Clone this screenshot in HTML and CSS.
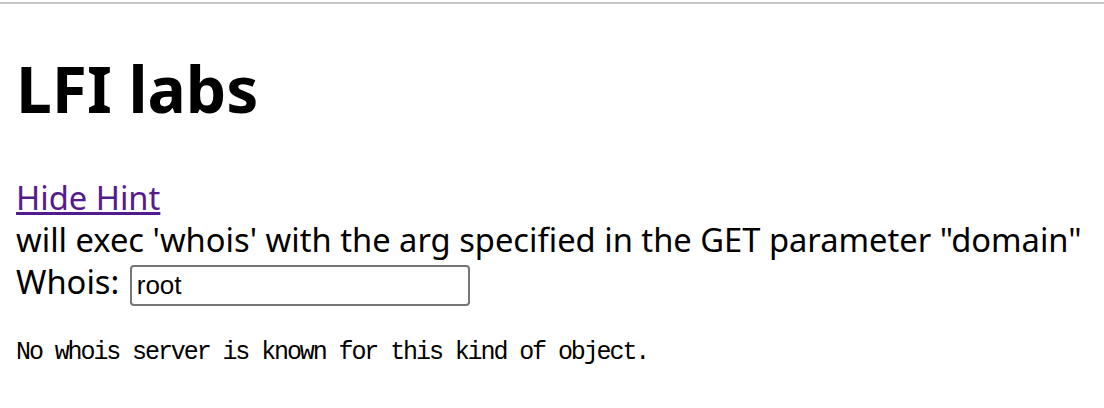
FILE: index.html
```
<!DOCTYPE html>
<html>
<head>
<meta charset="utf-8">
<title>LFI labs</title>
<link rel="stylesheet" href="styles.css">
</head>
<body>
<div class="chrome"></div>
<main class="page">
  <h1 class="title">LFI labs</h1>
  <div class="hint">
    <a class="hint-link" href="#">Hide Hint</a><br>
    will exec 'whois' with the arg specified in the GET parameter "domain"
  </div>
  <form class="whois-form">
    <label class="whois-label">Whois: <input class="whois-input" type="text" name="domain" value="root"></label>
  </form>
  <pre class="output">No whois server is known for this kind of object.</pre>
</main>
</body>
</html>
```
FILE: styles.css
```
html, body {
  margin: 0;
  padding: 0;
  background: #ffffff;
}
.chrome {
  height: 2px;
  margin-top: 2px;
  background: #c6c6c6;
}
.page {
  padding: 0 16px;
  font-family: "Noto Sans", "Open Sans", sans-serif;
  font-size: 32.7px;
  color: #000;
}
.title {
  font-size: 64px;
  font-weight: bold;
  margin: 43px 0 47px;
  line-height: 1.3;
}
.hint {
  line-height: 42px;
}
.hint-link {
  color: #551a8b;
}
.whois-form {
  margin: 0;
  line-height: 42px;
}
.whois-input {
  font-family: "Liberation Sans", Arial, sans-serif;
  font-size: 26px;
  width: 340px;
  height: 41px;
  box-sizing: border-box;
  border: 2px solid #767676;
  border-radius: 4px;
  padding: 0 5px;
  margin-left: 2px;
  vertical-align: middle;
}
.output {
  font-family: "Liberation Mono", monospace;
  font-size: 25px;
  letter-spacing: -2.1px;
  margin: 32px 0 0;
}
```
